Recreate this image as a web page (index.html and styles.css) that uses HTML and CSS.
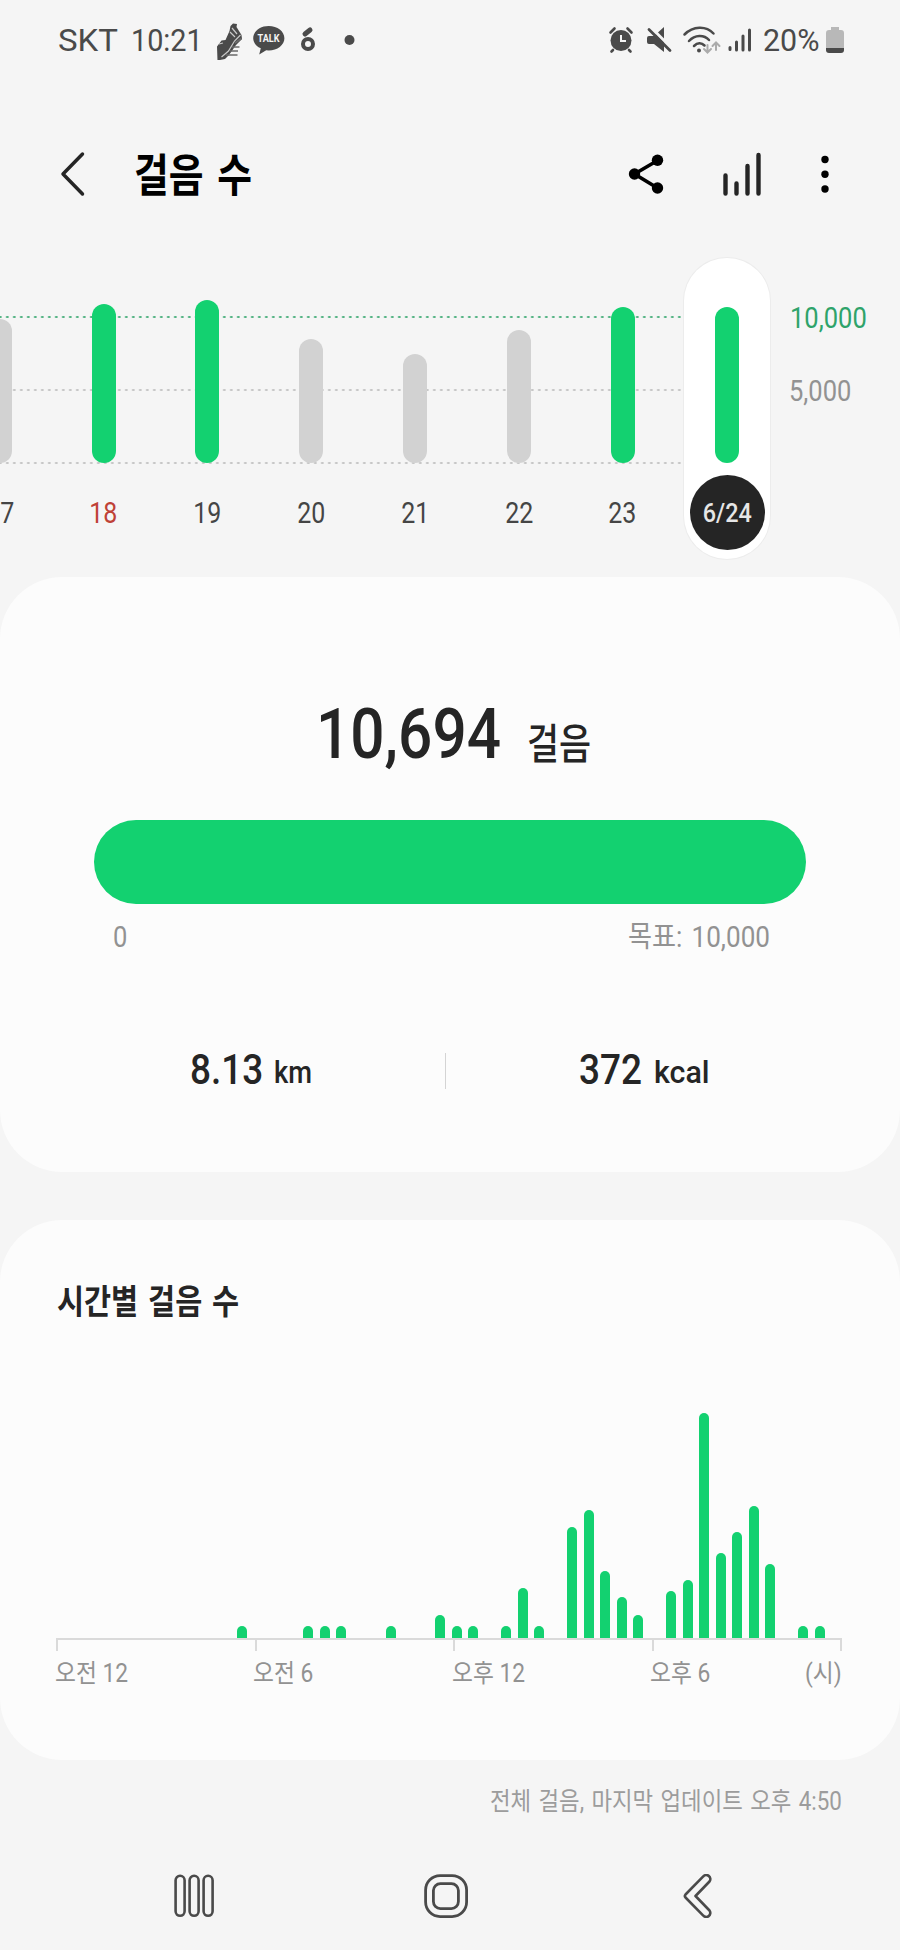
FILE: index.html
```html
<!DOCTYPE html>
<html lang="ko">
<head>
<meta charset="utf-8">
<title>걸음 수</title>
<link rel="stylesheet" href="styles.css">
</head>
<body>
<div class="statusbar">
  <span class="carrier t">SKT</span>
  <span class="clock t">10:21</span>
  <svg class="status-left" width="146" height="40" viewBox="214 20 146 40">
    <path d="M230.500 26l2.500-2.500 4 .5-.5 3 5 8 .5 4-6 6-7 10-4 4-7.500 1.500-.5-14 4.500-6 4-.5 4-9z" fill="#4a4a4a"/>
    <path d="M221.500 57l7-6 6-10 6-6M232 28l5 6M230 32l5 5M219 44l4-1" stroke="#c8c8c8" stroke-width="1.200" fill="none"/>
    <path d="M235 43l6.500-4.500M232 47h7.500M230 51h8M226 55h11.500" stroke="#6a6a6a" stroke-width="1.600"/>
    <path d="M268.700 26c8.700 0 15.700 5.400 15.700 12.200s-7 12.200-15.700 12.200l-2.500-.2-7 4.300 1.600-6.200c-4.600-2.200-7.600-5.900-7.600-10.100 0-6.800 6.800-12.200 15.500-12.200z" fill="#4a4a4a"/>
    <text x="257.500" y="42.400" class="talk" textLength="22" lengthAdjust="spacingAndGlyphs">TALK</text>
    <circle cx="308" cy="44" r="5" fill="none" stroke="#4a4a4a" stroke-width="4"/>
    <path d="M305 34l5-4" stroke="#4a4a4a" stroke-width="5" stroke-linecap="round"/>
    <circle cx="349.500" cy="40" r="5" fill="#4a4a4a"/>
  </svg>
  <svg class="status-right" width="148" height="40" viewBox="606 20 148 40">
    <g stroke="#4a4a4a" fill="none" stroke-linecap="round">
      <circle cx="621" cy="40.500" r="10.500" fill="#4a4a4a" stroke="none"/>
      <path d="M610.500 32.500l4-4M631.500 32.500l-4-4M613 50l-1.500 1.500M629 50l1.500 1.500" stroke-width="2.600"/>
      <path d="M621 35v6h5" stroke="#f5f5f5" stroke-width="2" stroke-linecap="butt"/>
      <path d="M649 36h5l10-9v25l-10-8h-5q-2 0-2-2v-4q0-2 2-2z" fill="#4a4a4a" stroke="none"/>
      <path d="M650.500 27l22 22" stroke="#f5f5f5" stroke-width="3" stroke-linecap="butt"/>
      <path d="M649 29.500l21 21" stroke-width="2.800"/>
      <path d="M684.500 34.500c8.500-8.500 21.500-9 29-1M689 41c6-6.500 15-6.500 20-1M694 46c3.500-3.500 7.500-3.500 10.500-.5" stroke-width="2.500"/>
      <circle cx="699" cy="50.500" r="2" fill="#4a4a4a" stroke="none"/>
      <path d="M707.500 44v17.500M703.500 57.500" stroke="none"/>
      <path d="M707.500 44.500v17" stroke="none"/>
      <path d="M707.500 45v7M704 49l3.500 3.500 3.500-3.500M716 50v-7.500M712.500 46l3.500-3.500 3.500 3.500" stroke="#ababab" stroke-width="2"/>
      <path d="M730 49.500v-2M736.500 50v-8M743 50V36M749.500 50V30" stroke-width="3"/>
    </g>
  </svg>
  <span class="percent t">20%</span>
  <svg class="battery" width="18" height="26" viewBox="0 0 18 26">
    <path d="M5 0h8v3h2q3 0 3 3v15H0V6q0-3 3-3h2z" fill="#b8b8b8"/>
    <path d="M0 21h18v2q0 3-3 3H3q-3 0-3-3z" fill="#4a4a4a"/>
  </svg>
</div>

<div class="appbar">
  <svg width="26" height="46" viewBox="0 0 26 46"><path d="M22.500 3L3 23l19.500 20" fill="none" stroke="#252525" stroke-width="3.500" stroke-linecap="round" stroke-linejoin="round"/></svg>
  <h1><span class="t">걸음 수</span></h1>
  <div class="actions">
    <svg width="36" height="44" viewBox="627 152 36 44"><path d="M656.500 160.500L633.500 174l23 14" fill="none" stroke="#000" stroke-width="3.600"/><circle cx="633.500" cy="174" r="5.700"/><circle cx="656.500" cy="160.300" r="5.700"/><circle cx="656.500" cy="188" r="5.700"/></svg>
    <svg width="40" height="44" viewBox="720 152 40 44"><path d="M723.500 193.500v-18M734.500 193.500v-10M745.500 193.500v-27.500M756.500 193.500V155" stroke="#252525" stroke-width="4.400" stroke-linecap="round"/></svg>
    <svg width="10" height="44" viewBox="819 152 10 44"><circle cx="824" cy="159.500" r="3.700"/><circle cx="824" cy="174.200" r="3.700"/><circle cx="824" cy="189" r="3.700"/></svg>
  </div>
</div>

<div class="week">
  <div class="days">
    <div class="day"><div class="track"><i style="height:144px"></i></div><b><span>17</span></b></div>
    <div class="day hit sun"><div class="track"><i style="height:159px"></i></div><b><span>18</span></b></div>
    <div class="day hit"><div class="track"><i style="height:163px"></i></div><b><span>19</span></b></div>
    <div class="day"><div class="track"><i style="height:124px"></i></div><b><span>20</span></b></div>
    <div class="day"><div class="track"><i style="height:109px"></i></div><b><span>21</span></b></div>
    <div class="day"><div class="track"><i style="height:133px"></i></div><b><span>22</span></b></div>
    <div class="day hit"><div class="track"><i style="height:156px"></i></div><b><span>23</span></b></div>
  </div>
  <div class="day hit today"><div class="track"><i style="height:156px"></i></div><b><span>6/24</span></b></div>
  <div class="scale">
    <span class="goal t">10,000</span>
    <span class="half t">5,000</span>
  </div>
</div>

<section class="card summary">
  <div class="total"><span class="count t">10,694</span><span class="unit t">걸음</span></div>
  <div class="progress"></div>
  <div class="range"><span class="t">0</span><span class="target t">목표: 10,000</span></div>
  <div class="stats">
    <div class="stat km"><span class="num t">8.13</span><span class="sub t">km</span></div>
    <div class="divider"></div>
    <div class="stat kcal"><span class="num t">372</span><span class="sub t">kcal</span></div>
  </div>
</section>

<section class="card hourly">
  <h2><span class="t">시간별 걸음 수</span></h2>
  <div class="bars">
    <i style="grid-column:12;height:12px"></i>
    <i style="grid-column:16;height:12px"></i>
    <i style="grid-column:17;height:12px"></i>
    <i style="grid-column:18;height:12px"></i>
    <i style="grid-column:21;height:12px"></i>
    <i style="grid-column:24;height:23px"></i>
    <i style="grid-column:25;height:12px"></i>
    <i style="grid-column:26;height:12px"></i>
    <i style="grid-column:28;height:12px"></i>
    <i style="grid-column:29;height:50px"></i>
    <i style="grid-column:30;height:12px"></i>
    <i style="grid-column:32;height:111px"></i>
    <i style="grid-column:33;height:128px"></i>
    <i style="grid-column:34;height:67px"></i>
    <i style="grid-column:35;height:41px"></i>
    <i style="grid-column:36;height:23px"></i>
    <i style="grid-column:38;height:47px"></i>
    <i style="grid-column:39;height:58px"></i>
    <i style="grid-column:40;height:225px"></i>
    <i style="grid-column:41;height:85px"></i>
    <i style="grid-column:42;height:106px"></i>
    <i style="grid-column:43;height:132px"></i>
    <i style="grid-column:44;height:74px"></i>
    <i style="grid-column:46;height:12px"></i>
    <i style="grid-column:47;height:12px"></i>
  </div>
  <div class="axis"><i></i><i></i><i></i><i></i></div>
  <div class="hours"><div><span class="t">오전 12</span></div><div><span class="t">오전 6</span></div><div><span class="t">오후 12</span></div><div><span class="t">오후 6</span></div><div class="end"><span class="t">(시)</span></div></div>
</section>

<div class="updated"><span class="t">전체 걸음, 마지막 업데이트 오후 4:50</span></div>

<div class="navbar">
  <svg width="40" height="44" viewBox="0 0 40 44" fill="none" stroke="#4a4a4a" stroke-width="2.600"><rect x="1.600" y="1.800" width="9" height="40" rx="4.500"/><rect x="15.600" y="1.800" width="9" height="40" rx="4.500"/><rect x="29.600" y="1.800" width="9" height="40" rx="4.500"/></svg>
  <svg class="home" width="44" height="44" viewBox="0 0 44 44" fill="none" stroke="#4a4a4a" stroke-width="2.800"><rect x="1.600" y="1.600" width="41" height="41" rx="14.500"/><rect x="9.400" y="9.600" width="25" height="25" rx="7"/></svg>
  <svg width="30" height="44" viewBox="0 0 30 44" fill="none" stroke="#4a4a4a" stroke-width="2.600" stroke-linejoin="round"><path d="M20 2.700a4 4 0 0 1 6.500 4.800L12.500 22l14 14.500a4 4 0 0 1-6.500 4.800L2.500 23.500q-1.300-1.500 0-3z"/></svg>
</div>
</body>
</html>
```
FILE: styles.css
```css
* { box-sizing: border-box; }
body {
  margin: 0;
  width: 900px;
  height: 1950px;
  overflow: hidden;
  background: #f5f5f5;
  color: #252525;
  font-family: Roboto, "Noto Sans CJK KR", sans-serif;
}
svg { display: block; flex: none; }
h1, h2 { margin: 0; font-weight: 700; }
.t {
  display: block;
  flex: none;
  white-space: nowrap;
  transform-origin: 0 50%;
}

/* Status bar */
.statusbar {
  display: flex;
  align-items: center;
  height: 80px;
  padding-left: 58px;
  font-size: 32px;
  color: #4a4a4a;
}
.carrier { width: 73px; transform: scaleX(1.03); }
.clock { width: 83px; transform: scaleX(.9); }
.status-right { margin-left: 246px; }
.percent { width: 63px; margin-left: 9px; transform: scaleX(.95); }
.talk { font: 700 10px Roboto, sans-serif; fill: #f5f5f5; }

/* App bar */
.appbar {
  display: flex;
  align-items: center;
  height: 188px;
  margin-bottom: -10px;
  padding: 0 70px 0 60px;
}
.appbar h1 {
  margin-left: 48px;
  padding-top: 5px;
  width: 200px;
  font-size: 45px;
  line-height: 60px;
  word-spacing: 5px;
  color: #000;
}
.appbar h1 .t { width: 200px; transform: scaleX(.84); }
.actions {
  display: flex;
  justify-content: space-between;
  width: 202px;
  margin-left: auto;
}

/* Daily chart */
.week { display: flex; height: 301px; }
.days {
  display: flex;
  flex: none;
  width: 735px;
  margin-left: -52px;
  background:
    radial-gradient(circle at center, #4cb07e 1px, transparent 1.4px) 6.800px 57px / 7px 4px repeat-x,
    radial-gradient(circle at center, #c4c4c4 1px, transparent 1.4px) 6.800px 130px / 7px 4px repeat-x,
    radial-gradient(circle at center, #c4c4c4 1px, transparent 1.4px) 6.800px 203px / 7px 4px repeat-x;
}
.day {
  flex: none;
  width: 103.800px;
  height: 301px;
  font-size: 29px;
  color: #454545;
}
.track {
  display: flex;
  justify-content: center;
  align-items: flex-end;
  height: 205px;
}
.track i { width: 24px; border-radius: 12px; background: #d2d2d2; }
.hit .track i { background: #13d170; }
.day b {
  display: flex;
  justify-content: center;
  margin: 12px auto 0;
  width: 75px;
  height: 75px;
  line-height: 76px;
  font-weight: 400;
}
.day b span { transform: scaleX(.86); }
.day.sun { color: #bf4136; }
.today {
  width: 86px;
  margin-left: 1px;
  background: #fff;
  border-radius: 43px;
  box-shadow: 0 0 0 1px #ececec;
}
.today b {
  border-radius: 50%;
  background: #252525;
  color: #e6e6e6;
  font-size: 26px;
  font-weight: 500;
}
.today b span { transform: scaleX(.9); }
.scale {
  padding: 42px 0 0 19px;
  font-size: 29px;
  line-height: 36px;
  color: #929292;
}
.scale .t { transform: scaleX(.88); }
.scale .goal { margin-left: 1px; margin-bottom: 37px; color: #2ea36a; }

/* Cards */
.card { background: #fcfcfc; border-radius: 62px; }
.summary { height: 595px; margin-top: 18px; padding-top: 114px; }
.total { display: flex; height: 80px; padding-left: 316px; font-weight: 500; }
.count { width: 211px; font-size: 71px; line-height: 86px; transform: scaleX(.85); }
.unit { font-size: 42px; line-height: 108px; transform: scaleX(.83); }
.progress {
  width: 712px;
  height: 84px;
  margin: 49px 0 0 94px;
  border-radius: 42px;
  background: #13d170;
}
.range {
  display: flex;
  padding: 13px 0 0 113px;
  font-size: 29px;
  line-height: 40px;
  color: #929292;
}
.range .t { transform: scaleX(.88); }
.range .target { margin-left: 499px; word-spacing: 3px; transform: scaleX(.9); }
.stats { display: flex; height: 60px; margin-top: 84px; align-items: center; }
.stat { display: flex; padding-top: 3px; line-height: 60px; font-weight: 500; }
.km { width: 445px; padding-left: 190px; }
.divider { width: 1px; height: 36px; background: #d4d4d4; }
.kcal { padding-left: 133px; }
.num { width: 84px; font-size: 42px; transform: scaleX(.88); }
.kcal .num { width: 75px; }
.sub { font-size: 31px; line-height: 66px; transform: scaleX(.88); }
.kcal .sub { transform: scaleX(.98); }

/* Hourly chart */
.hourly { height: 540px; margin-top: 48px; padding: 54px 0 0 52px; }
.hourly h2 { height: 52px; padding-left: 5px; font-size: 34px; line-height: 56px; word-spacing: 3px; }
.hourly h2 .t { transform: scaleX(.865); }
.bars {
  display: grid;
  grid-template-columns: repeat(47, 16.530px);
  grid-template-rows: 312px;
  align-items: end;
  justify-items: center;
}
.bars i { width: 10px; border-radius: 5px 5px 0 0; background: #13d170; }
.axis {
  display: flex;
  width: 786px;
  height: 13px;
  margin-left: 4px;
  border: solid #dadada;
  border-width: 2px 2px 0 0;
}
.axis i { flex: none; width: 198.600px; border-left: 2px solid #dadada; }
.axis i:last-child { width: 2px; }
.hours {
  display: flex;
  margin-left: 3px;
  padding-top: 5px;
  font-size: 25px;
  line-height: 36px;
  color: #929292;
}
.hours div { flex: none; width: 198.400px; }
.hours .t { transform: scaleX(.91); }
.hours .end { width: 40px; margin-left: -44px; }

/* Footer */
.updated {
  height: 42px;
  margin-top: 21px;
  padding-left: 490px;
  font-size: 25px;
  line-height: 42px;
  color: #9c9c9c;
}
.updated .t { word-spacing: 2px; transform: scaleX(.895); }
.navbar {
  display: flex;
  justify-content: space-between;
  width: 539px;
  margin: 51px 0 0 174px;
}
.home { margin-right: 6px; }
```
